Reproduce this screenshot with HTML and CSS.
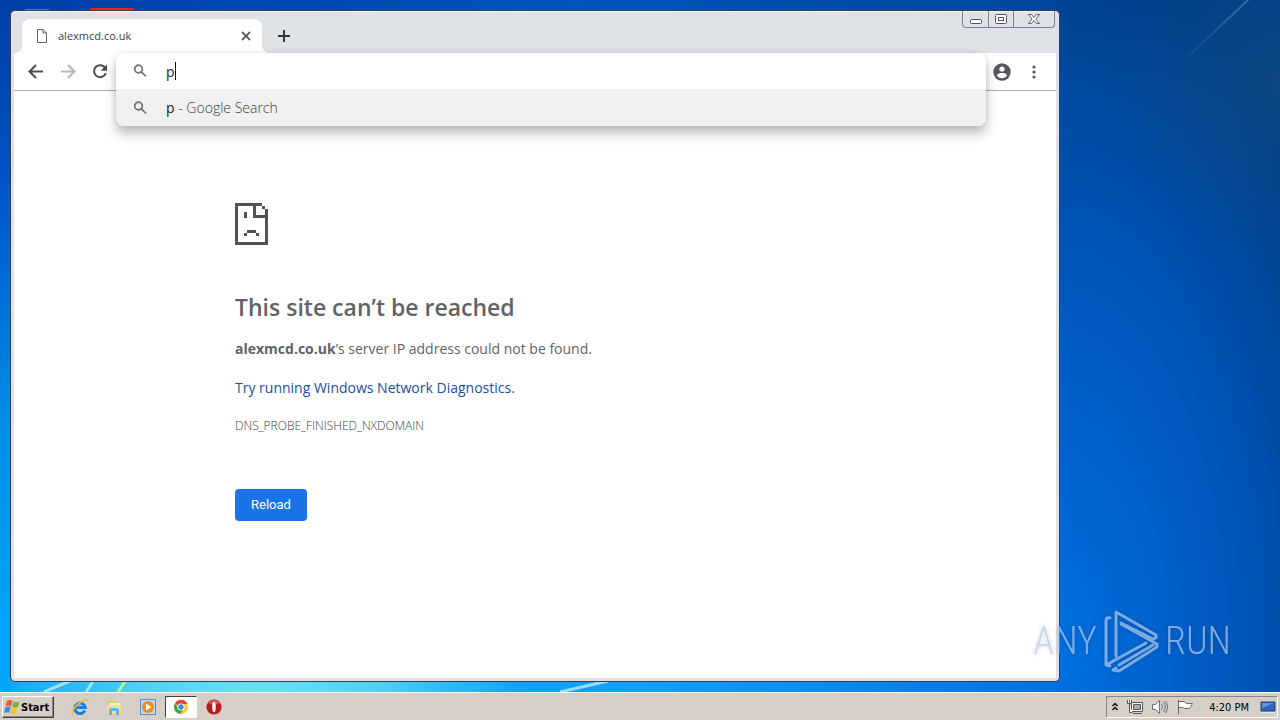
FILE: index.html
```html
<!DOCTYPE html>
<html lang="en">
<head>
<meta charset="utf-8">
<title>alexmcd.co.uk</title>
<link rel="stylesheet" href="styles.css">
</head>
<body>
<div class="screen">
  <div class="desktop">
    <svg class="wallpaper" viewBox="0 0 1280 692" preserveAspectRatio="none" aria-hidden="true">
      <defs>
        <radialGradient id="glow" gradientUnits="userSpaceOnUse" cx="260" cy="720" r="430"><stop offset="0" stop-color="#6fe4f2"/><stop offset=".3" stop-color="#4ccff6"/><stop offset=".55" stop-color="#22b4f8" stop-opacity=".7"/><stop offset=".65" stop-color="#159cfb" stop-opacity="0"/></radialGradient>
        <linearGradient id="ray" x1="1" y1="0" x2="0" y2="1"><stop offset="0" stop-color="#7fb0dc" stop-opacity=".4"/><stop offset="1" stop-color="#7fb0dc" stop-opacity="0"/></linearGradient>
      </defs>
      <rect x="11" y="680" width="1269" height="12" fill="url(#glow)"/>
      <path d="M44 692L72 680M86 692L94 680M560 692L608 681" stroke="#b9efff" stroke-width="3" opacity=".8"/>
      <path d="M118 692L126 680" stroke="#b6ef9a" stroke-width="3"/>
      <path d="M1180 64L1250 -2" stroke="url(#ray)" stroke-width="2"/>
      <path d="M90 10V8H134V10" fill="#d92b20"/>
      <path d="M25 10h24" stroke="#8fb4e0" stroke-width="1"/>
    </svg>

    <main class="window">
      <header class="tabstrip">
        <div class="tab">
          <svg class="page-icon" width="12" height="14" viewBox="0 0 12 14" fill="none" stroke="#5f6368"><path d="M1.500 .5h5.500l3.500 3.500v9.500h-9zM7 .5V4h3.500"/></svg>
          <span class="tab-title">alexmcd.co.uk</span>
          <button class="icon-btn" aria-label="Close tab"><svg width="10" height="10" viewBox="0 0 10 10" stroke="#5a5d62" stroke-width="1.800"><path d="M1 1l8 8M9 1L1 9"/></svg></button>
        </div>
        <button class="icon-btn new-tab" aria-label="New tab"><svg width="12" height="12" viewBox="0 0 12 12" stroke="#35383d" stroke-width="2"><path d="M6 0v12M0 6h12"/></svg></button>
        <div class="controls">
          <button aria-label="Minimize"><svg width="12" height="12" viewBox="0 0 12 12"><rect x=".5" y="6.500" width="11" height="4" rx="1" fill="#fff" stroke="#50535c"/></svg></button>
          <button aria-label="Maximize"><svg width="12" height="12" viewBox="0 0 12 12" fill="#fff" stroke="#50535c"><rect x=".5" y="1.500" width="11" height="9" rx="1"/><rect x="3.500" y="4.500" width="5" height="3"/></svg></button>
          <button class="wide" aria-label="Close"><svg width="12" height="12" viewBox="0 0 12 12"><path d="M.5 1.500h3L6 4.500l2.500-3h3L8 6l3.500 4.500h-3L6 7.500l-2.500 3h-3L4 6z" fill="#fff" stroke="#60636c"/></svg></button>
        </div>
      </header>

      <nav class="toolbar">
        <button class="icon-btn" aria-label="Back"><svg width="16" height="16" viewBox="0 0 16 16" fill="none" stroke="#4a4d52" stroke-width="2"><path d="M15 7.500H2M8 1L1.500 7.500 8 14"/></svg></button>
        <button class="icon-btn" aria-label="Forward"><svg width="16" height="16" viewBox="0 0 16 16" fill="none" stroke="#b5b7ba" stroke-width="2"><path d="M1 7.500h13M8 1L14.500 7.500 8 14"/></svg></button>
        <button class="icon-btn" aria-label="Reload page"><svg width="16" height="16" viewBox="0 0 16 16"><path d="M13.300 4.200A6 6 0 1 0 13.800 9" fill="none" stroke="#4a4d52" stroke-width="2"/><path d="M15 .5v6.200H8.800z" fill="#4a4d52"/></svg></button>
        <div class="omnibox-slot">
          <div class="omnibox">
            <label class="row">
              <svg width="14" height="14" viewBox="0 0 14 14" fill="none" stroke="#6c6f73" stroke-width="1.700"><circle cx="5.500" cy="5" r="3.800"/><path d="M8.300 7.800l4.700 4.700"/></svg>
              <input type="text" value="p" aria-label="Address and search bar">
            </label>
            <div class="row suggestion">
              <svg width="14" height="14" viewBox="0 0 14 14" fill="none" stroke="#6c6f73" stroke-width="1.700"><circle cx="5.500" cy="5" r="3.800"/><path d="M8.300 7.800l4.700 4.700"/></svg>
              <span><b>p</b> - Google Search</span>
            </div>
            <i class="caret"></i>
          </div>
        </div>
        <button class="icon-btn" aria-label="Profile"><svg width="18" height="18" viewBox="0 0 18 18"><circle cx="9" cy="9" r="8.700" fill="#54585e"/><circle cx="9" cy="6" r="2.600" fill="#fff"/><path d="M3.800 12.300C4.600 10.600 7 10 9 10s4.400.6 5.200 2.300C13 14.200 11.200 15.200 9 15.200s-4-1-5.200-2.900z" fill="#fff"/></svg></button>
        <button class="icon-btn" aria-label="Menu"><svg width="4" height="14" viewBox="0 0 4 14" fill="#54585e"><circle cx="2" cy="2" r="1.600"/><circle cx="2" cy="7" r="1.600"/><circle cx="2" cy="12" r="1.600"/></svg></button>
      </nav>

      <section class="content">
        <svg class="sad" width="33" height="42" viewBox="0 0 11 14" fill="#535353" shape-rendering="crispEdges"><path d="M0 0h9v1H7v3h3V2h1v12H0zM1 1v12h9V5H6V1zM9 1h1v1H9zM3 3h1v2H3zM4 9h3v1H4zM3 10h1v1H3zM7 10h1v1H7z" fill-rule="evenodd"/></svg>
        <h1>This site can’t be reached</h1>
        <p><strong>alexmcd.co.uk</strong>’s server IP address could not be found.</p>
        <p><a href="#">Try running Windows Network Diagnostics.</a></p>
        <p class="code">DNS_PROBE_FINISHED_NXDOMAIN</p>
        <button class="reload">Reload</button>
      </section>
    </main>

    <div class="watermark">
      <span>ANY</span>
      <svg width="56" height="64" viewBox="0 0 56 64" fill="none" stroke="currentColor" stroke-width="3" stroke-linejoin="round" stroke-linecap="round"><path d="M7 9Q3 8 3 12V56L43 34M13 47V3L53 26Q54 29 50 30L18 14M3 56L7 57M13 59L10 61L16 62L54 38V35L18 15M16 56L50 36"/></svg>
      <span>RUN</span>
    </div>
  </div>

  <footer class="taskbar">
    <button class="start"><svg width="16" height="16" viewBox="0 0 16 16"><path d="M3 2q3-2 5.500 0L7 7.500Q4.500 5.800 1.500 7.500z" fill="#e9602c"/><path d="M9.500 2.500q3 1.500 6 0L14 8q-3 1.500-6 0z" fill="#76b73a"/><path d="M1.200 8.500q3-1.700 5.500 0L5 14q-2.500-1.700-5 0z" fill="#3b8ed8"/><path d="M7.700 9q3 1.500 6 0l-1.500 5.500q-3 1.500-6 0z" fill="#f6c22c"/></svg>Start</button>
    <div class="quick">
      <button aria-label="Internet Explorer"><svg width="18" height="18" viewBox="0 0 18 18" fill="none"><path d="M13.800 12.500A5.200 5.200 0 1 1 14.200 9.500H5" stroke="#1f7fd6" stroke-width="3"/><path d="M2 16.500C-1 14 5 7 10 4c4-2.500 7-3 7-1" stroke="#efbd38" stroke-width="1.600"/></svg></button>
      <button aria-label="File Explorer"><svg width="18" height="18" viewBox="0 0 18 18"><path d="M2 4l5-2 2 2h6v12H2z" fill="#e8c765"/><path d="M4 5h11v5H4z" fill="#fff3b5"/><path d="M2 7h14v9H2z" fill="#f7df8c"/><path d="M4 17v-5q0-2 2-2h6q2 0 2 2v5h-3v-4H7v4z" fill="#66b4dc"/></svg></button>
      <button aria-label="Media Player"><svg width="18" height="18" viewBox="0 0 18 18"><rect x="1.500" y="1.500" width="15" height="15" fill="#b9d8f2" stroke="#5590cb"/><circle cx="9" cy="9" r="6" fill="#f28a1b"/><path d="M7 5.500l5.500 3.500L7 12.500z" fill="#fff"/></svg></button>
      <button class="active" aria-label="Chrome"><svg width="16" height="16" viewBox="0 0 16 16"><circle cx="8" cy="8" r="7" fill="#f7c934"/><path d="M8 8L2 4.400A7 7 0 0 1 14.500 5H8z" fill="#df4535"/><path d="M2 4.400A7 7 0 0 0 7.500 15L10.500 9.500 5.500 9.500z" fill="#38a253"/><circle cx="8" cy="8" r="3.600" fill="#fff"/><circle cx="8" cy="8" r="2.700" fill="#4480e6"/></svg></button>
      <button aria-label="Opera"><svg width="18" height="18" viewBox="0 0 18 18"><circle cx="9" cy="9" r="7.600" fill="#b51c20"/><path d="M3 5a7.500 7.500 0 0 1 12 0Q9 8 3 5z" fill="#da5557"/><ellipse cx="9" cy="9" rx="1.700" ry="5.300" fill="#fff"/></svg></button>
    </div>
    <div class="tray">
      <svg width="8" height="12" viewBox="0 0 8 12" fill="none" stroke="#111" stroke-width="1.500"><path d="M1.500 5L4 2.500 6.500 5M1.500 9L4 6.500 6.500 9"/></svg>
      <svg width="16" height="16" viewBox="0 0 16 16" fill="#f8f8f8" stroke="#55585a"><path d="M4.500 3.500h11v9h-11z"/><path d="M6.500 5.500h7v5h-7z" fill="#aaa"/><path d="M6 14.500h9M.5 1v3.500h4V1M2.500 1v3M2.500 5v8.500h3"/></svg>
      <svg width="18" height="16" viewBox="0 0 18 16" fill="#fafafa" stroke="#6d7072"><path d="M1.500 5.500h3l4-4v13l-4-4h-3z"/><path d="M10.500 5q2 3 0 6M12.500 3q3.500 5 0 10M14.500 2q4 6 0 12" fill="none"/></svg>
      <svg width="17" height="16" viewBox="0 0 17 16" fill="#fafafa" stroke="#66696b"><path d="M1.500 1v14M1.500 2.500h6q1 2 3 2h5l-3 5h-5q-1-1-2-1h-4"/></svg>
      <time>4:20 PM</time>
      <svg width="16" height="14" viewBox="0 0 16 14"><path d="M1 2h14v9H1z" fill="#2c64b7" stroke="#173f83"/><path d="M2 3h12L2 8z" fill="#6296da"/><path d="M1 12.500h14" stroke="#d7eaff"/></svg>
    </div>
  </footer>
</div>
</body>
</html>
```
FILE: styles.css
```css
* { box-sizing: border-box; }
body { margin: 0; font-family: "Open Sans", "Noto Sans", sans-serif; }
button { font: inherit; margin: 0; padding: 0; border: 0; background: none; }
svg { display: block; flex: none; }

.screen { display: flex; flex-direction: column; height: 100vh; overflow: hidden; }

.desktop {
  position: relative;
  flex: 1;
  display: flex;
  min-height: 0;
  padding: 10px 220px 10px 10px;
  background:
    radial-gradient(circle at 100% 12%, #144c8099 0, #0a448000 170px),
    radial-gradient(ellipse 330px 720px at 0 96%, #0070e0 0, #0060cc 35%, #0050ae 68%, #003f88 100%) right / 224px 100% no-repeat,
    linear-gradient(to right, #003fa6, #0054bc 45%, #00428c) top / 100% 11px no-repeat,
    linear-gradient(to bottom, #003fa6, #0052c4 25%, #008ce6 60%, #00a4f8 90%) left / 20px 100% no-repeat,
    linear-gradient(to right, #00a4f8, #12a0fa 50%, #0070e0 83%);
}
.wallpaper { position: absolute; inset: 0; width: 100%; height: 100%; }

.window {
  position: relative;
  flex: 1;
  display: flex;
  flex-direction: column;
  min-width: 0;
  border: 1px solid #34404e;
  border-radius: 5px;
  background: #dee1e6;
  padding: 0 3px 3px;
  box-shadow: inset 0 1px #f3f4f6;
}

.tabstrip { display: flex; height: 42px; padding: 8px 1px 0 8px; }
.tab {
  position: relative;
  display: flex;
  align-items: center;
  width: 240px;
  padding: 0 8px 0 14px;
  gap: 10px;
  border-radius: 8px 8px 0 0;
  background: #fff;
}
.tab::before, .tab::after {
  content: "";
  position: absolute;
  bottom: 0;
  width: 8px;
  height: 8px;
}
.tab::before { right: 100%; background: radial-gradient(circle at 0 0, #dee1e6 8px, #fff 8px); }
.tab::after { left: 100%; background: radial-gradient(circle at 100% 0, #dee1e6 8px, #fff 8px); }
.tab-title { flex: 1; font-size: 11px; line-height: 14px; color: #3c4043; }
.icon-btn { display: flex; align-items: center; justify-content: center; width: 16px; height: 16px; }
.new-tab { margin: 9px 0 0 14px; }
.controls {
  display: flex;
  align-self: flex-start;
  margin: -8px 0 0 auto;
  border: 1px solid #7d818a;
  border-top: 0;
  border-radius: 0 0 4px 4px;
}
.controls button { display: flex; align-items: center; justify-content: center; width: 25px; height: 16px; }
.controls button + button { border-left: 1px solid #7d818a; }
.controls .wide { width: 41px; }

.toolbar {
  display: flex;
  align-items: center;
  height: 38px;
  padding: 0 14px;
  gap: 16px;
  background: #fff;
  border-bottom: 1px solid #a9abae;
}
.omnibox-slot { position: relative; z-index: 1; flex: 1; align-self: stretch; margin: 0 -8px; }
.omnibox {
  position: absolute;
  inset: 0 0 auto;
  overflow: hidden;
  border-radius: 8px;
  background: #fff;
  box-shadow: 0 8px 12px #00000040, 0 0 5px #0000001a;
}
.row { display: flex; align-items: center; height: 36px; padding-left: 17px; gap: 19px; font-size: 14px; color: #5f6368; }
.row input { flex: 1; min-width: 0; padding: 0; border: 0; outline: 0; background: none; font: inherit; color: #202124; }
.caret { position: absolute; left: 59px; top: 9px; width: 1px; height: 18px; background: #000; }
.suggestion { height: 37px; background: #f0f0f0; font-weight: 300; color: #3c4043; }
.suggestion b { font-weight: 400; color: #202124; }

.content {
  flex: 1;
  padding: 112px 24px 0 221px;
  background: #fff;
  color: #5f6368;
}
h1 { margin: 44px 0 12px; font-size: 23px; line-height: 36px; font-weight: 600; }
p { margin: 0 0 15px; font-size: 14px; line-height: 24px; }
a { color: #1a4fa3; text-decoration: none; }
.code { font-size: 12px; line-height: 22px; font-weight: 300; color: #3c4043; }
.reload {
  display: block;
  margin-top: 52px;
  padding: 0 16px;
  border-radius: 4px;
  background: #1a73e8;
  color: #fff;
  font: 13px/32px Roboto, sans-serif;
}

.watermark {
  position: absolute;
  right: 49px;
  bottom: 19px;
  display: flex;
  align-items: center;
  gap: 6px;
  color: #b4cff2b0;
  font-family: "Roboto Condensed", Roboto, sans-serif;
  font-size: 38px;
  font-weight: 300;
  filter: drop-shadow(0 0 2px #00000040);
}

.taskbar {
  display: flex;
  align-items: center;
  height: 28px;
  padding: 1px 2px 0;
  border-top: 1px solid #fff;
  background: #d6cfc8;
}
.start {
  display: flex;
  align-items: center;
  gap: 1px;
  width: 52px;
  height: 22px;
  padding-left: 1px;
  border: 1px solid;
  border-color: #fff #404040 #404040 #fff;
  box-shadow: inset -1px -1px #8a8580;
  font: bold 11px "DejaVu Sans Condensed", "DejaVu Sans", sans-serif;
}
.quick { display: flex; margin-left: 9px; }
.quick button { display: flex; align-items: center; justify-content: center; width: 34px; height: 22px; }
.quick .active { width: 32px; background: #fff; border: 1px solid; border-color: #404040 #fff #fff #404040; }
.tray {
  display: flex;
  align-items: center;
  gap: 8px;
  height: 22px;
  margin-left: auto;
  padding: 0 1px 0 4px;
  border: 1px solid;
  border-color: #8a8580 #fff #fff #8a8580;
}
time { margin: 0 3px 0 7px; font: 11px "DejaVu Sans Condensed", "DejaVu Sans", sans-serif; }
```
